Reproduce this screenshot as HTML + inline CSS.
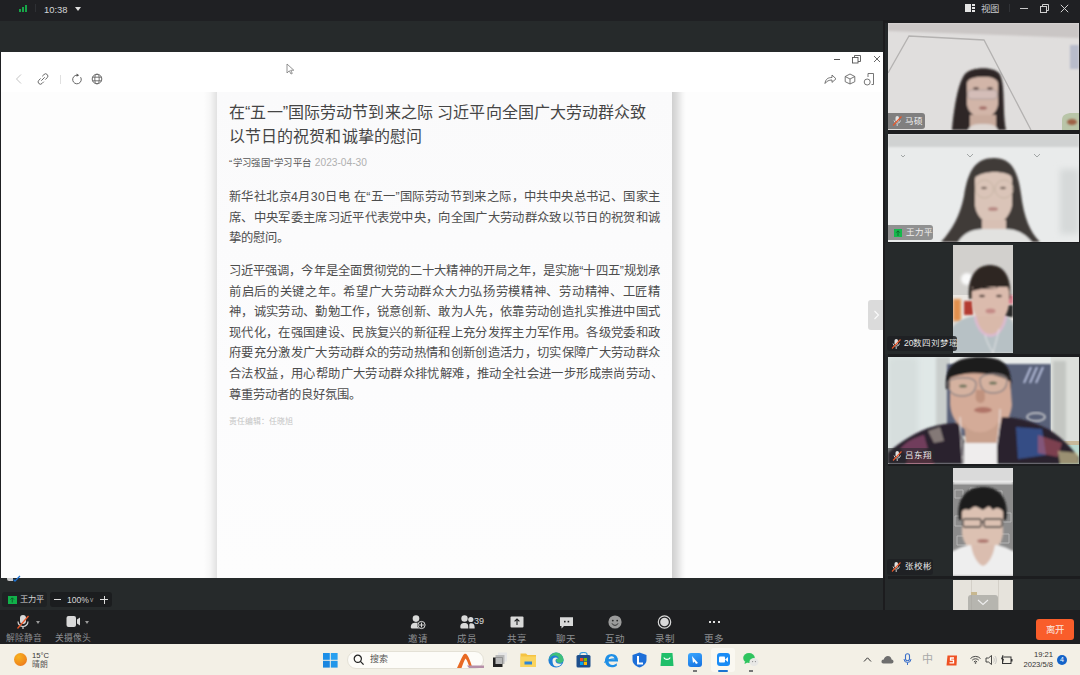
<!DOCTYPE html>
<html lang="zh-CN"><head><meta charset="utf-8">
<style>
*{margin:0;padding:0;box-sizing:border-box}
html,body{width:1080px;height:675px;overflow:hidden;background:#1f2023;font-family:"Liberation Sans",sans-serif;position:relative}
.a{position:absolute}
#topbar{left:0;top:0;width:1080px;height:20px;background:#1f2023}
#band{left:0;top:21px;width:885px;height:31px;background:#262a2b}
#panel{left:1px;top:52px;width:882px;height:526px;background:#ffffff;overflow:hidden}
#namearea{left:0;top:578px;width:885px;height:32px;background:#262a2b}
#toolbar{left:0;top:610px;width:1080px;height:34px;background:#1e1f21}
#taskbar{left:0;top:644px;width:1080px;height:31px;background:#f3f0e6}
#col{left:885px;top:20px;width:195px;height:590px;background:#1c1d1f}
.tile{background:#262a2b}
.vid{overflow:hidden}
.t{white-space:nowrap;line-height:1}
.title{font-size:16px;color:#454545;left:229px;letter-spacing:0.08px}
.body{font-size:12.3px;color:#4d4d4d;left:229px}
.lbl{font-size:9.5px;color:#8c8e91;width:40px;text-align:center}
</style></head><body>
<div id="topbar" class="a"></div>
<!-- signal -->
<div class="a" style="left:19px;top:9px;width:2px;height:3px;background:#17a548"></div>
<div class="a" style="left:22px;top:7px;width:2px;height:5px;background:#17a548"></div>
<div class="a" style="left:25px;top:5px;width:2px;height:7px;background:#17a548"></div>
<div class="a" style="left:35px;top:4px;width:1px;height:8px;background:#2e3034"></div>
<div class="a t" style="left:44px;top:4.5px;font-size:9.4px;color:#d4d6d8">10:38</div>
<div class="a" style="left:75px;top:6.5px;width:0;height:0;border-left:3px solid transparent;border-right:3px solid transparent;border-top:4px solid #e0e0e0"></div>
<!-- top right -->
<div class="a" style="left:965px;top:4px;width:6px;height:8px;background:#e4e4e4"></div>
<div class="a" style="left:972px;top:4px;width:3px;height:2px;background:#e4e4e4"></div>
<div class="a" style="left:972px;top:7px;width:3px;height:2px;background:#e4e4e4"></div>
<div class="a" style="left:972px;top:10px;width:3px;height:2px;background:#e4e4e4"></div>
<div class="a t" style="left:981px;top:4px;font-size:9.4px;color:#c8cacc">视图</div>
<div class="a" style="left:1009px;top:4px;width:1px;height:8px;background:#303236"></div>
<div class="a" style="left:1020px;top:8px;width:8px;height:1px;background:#c8c8c8"></div>
<svg class="a" style="left:1040px;top:4px" width="9" height="9"><rect x="0.5" y="2.5" width="6" height="6" fill="none" stroke="#cfcfcf" stroke-width="1"/><path d="M2.5 2.5V0.5H8.5V6.5H6.5" fill="none" stroke="#cfcfcf" stroke-width="1"/></svg>
<svg class="a" style="left:1060px;top:4px" width="9" height="9"><path d="M0.8 0.8L8.2 8.2M8.2 0.8L0.8 8.2" stroke="#d0d0d0" stroke-width="1"/></svg>

<div id="band" class="a"></div>
<div id="panel" class="a"></div>
<!-- panel toolbar -->
<svg class="a" style="left:13px;top:73px" width="12" height="12"><path d="M8 1.5L3.5 6L8 10.5" fill="none" stroke="#c4c4c4" stroke-width="1"/></svg>
<svg class="a" style="left:36px;top:72px" width="14" height="14"><path d="M6.2 4.3L8 2.5a2.2 2.2 0 0 1 3.2 3.2L9.3 7.6M7.8 9.7L6 11.5a2.2 2.2 0 0 1-3.2-3.2L4.7 6.4M5.3 8.7L8.7 5.3" fill="none" stroke="#6a6a6a" stroke-width="1"/></svg>
<div class="a" style="left:60px;top:75px;width:1px;height:9px;background:#e0e0e0"></div>
<svg class="a" style="left:71px;top:73px" width="12" height="12"><path d="M6 2.2A4.3 4.3 0 1 0 9.6 4.2" fill="none" stroke="#666" stroke-width="1"/><path d="M5.6 0.6L8.2 2.2L5.6 3.8Z" fill="#555"/></svg>
<svg class="a" style="left:91px;top:73px" width="12" height="12"><circle cx="6" cy="6" r="4.8" fill="none" stroke="#666" stroke-width="1"/><ellipse cx="6" cy="6" rx="2.2" ry="4.8" fill="none" stroke="#666" stroke-width="0.9"/><path d="M1.5 4.2H10.5M1.5 7.8H10.5" stroke="#666" stroke-width="0.9"/></svg>
<svg class="a" style="left:286px;top:63px" width="9" height="12"><path d="M1 1L1 10L3.3 7.8L5 11L6.3 10.4L4.7 7.3L7.8 7.2Z" fill="#fff" stroke="#777" stroke-width="0.8"/></svg>
<div class="a" style="left:834px;top:59px;width:6px;height:1px;background:#555"></div>
<svg class="a" style="left:852px;top:55px" width="9" height="9"><rect x="0.5" y="2.5" width="5.5" height="5.5" fill="none" stroke="#555" stroke-width="0.9"/><path d="M2.5 2.5V0.5H8.5V6.5H6" fill="none" stroke="#555" stroke-width="0.9"/></svg>
<svg class="a" style="left:873px;top:55px" width="8" height="8"><path d="M1 1L7 7M7 1L1 7" stroke="#555" stroke-width="0.9"/></svg>
<svg class="a" style="left:824px;top:73px" width="13" height="12"><path d="M1 10.5C1.5 6 4 4.5 8 4.5V2L12 5.8L8 9.4V7C5 7 2.8 8 1 10.5Z" fill="none" stroke="#666" stroke-width="0.9"/></svg>
<svg class="a" style="left:844px;top:73px" width="12" height="12"><path d="M6 1L10.8 3.5V8.7L6 11L1.2 8.7V3.5Z M1.2 3.5L6 6L10.8 3.5M6 6V11" fill="none" stroke="#666" stroke-width="0.9"/></svg>
<svg class="a" style="left:863px;top:72px" width="12" height="14"><path d="M5 1.5H10.5V12.5H8.5" fill="none" stroke="#666" stroke-width="0.9"/><path d="M5 1.5V5" stroke="#666" stroke-width="0.9"/><circle cx="4.2" cy="10" r="3" fill="none" stroke="#666" stroke-width="0.9"/></svg>

<!-- content area -->
<div class="a" style="left:1px;top:92px;width:882px;height:486px;background:#fdfdfd"></div>
<div class="a" style="left:204px;top:92px;width:13px;height:486px;background:linear-gradient(90deg,rgba(0,0,0,0),rgba(0,0,0,0.03) 50%,rgba(0,0,0,0.11))"></div>
<div class="a" style="left:217px;top:92px;width:455px;height:486px;background:linear-gradient(180deg,#fafafb,#fcfcfd 60%,#fdfdfd)"></div>
<div class="a" style="left:672px;top:92px;width:14px;height:486px;background:linear-gradient(90deg,rgba(0,0,0,0.18),rgba(0,0,0,0.12) 35%,rgba(0,0,0,0.03) 75%,rgba(0,0,0,0))"></div>

<div class="a" style="left:868px;top:300px;width:15px;height:30px;border-radius:3px 0 0 3px;background:#dbdbdb"></div>
<svg class="a" style="left:873px;top:310px" width="7" height="10"><path d="M1.5 1L5.5 5L1.5 9" fill="none" stroke="#fafafa" stroke-width="1.1"/></svg>
<div class="a t title" style="top:104.8px">在“五一”国际劳动节到来之际 习近平向全国广大劳动群众致</div>
<div class="a t title" style="top:129.2px">以节日的祝贺和诚挚的慰问</div>
<div class="a t" style="left:229px;top:158px;font-size:9.4px;letter-spacing:0.45px;color:#555">“学习强国”学习平台 <span style="color:#b0b0b0;font-size:10.2px;letter-spacing:0">2023-04-30</span></div>

<div class="a t body" style="top:191.2px;letter-spacing:0.4px">新华社北京4月30日电 在“五一”国际劳动节到来之际，中共中央总书记、国家主</div>
<div class="a t body" style="top:211.6px;letter-spacing:0.32px">席、中央军委主席习近平代表党中央，向全国广大劳动群众致以节日的祝贺和诚</div>
<div class="a t body" style="top:231.6px;letter-spacing:0px">挚的慰问。</div>

<div class="a t body" style="top:265.2px;letter-spacing:0.08px">习近平强调，今年是全面贯彻党的二十大精神的开局之年，是实施“十四五”规划承</div>
<div class="a t body" style="top:285.8px;letter-spacing:0.7px">前启后的关键之年。希望广大劳动群众大力弘扬劳模精神、劳动精神、工匠精</div>
<div class="a t body" style="top:306.3px;letter-spacing:0.32px">神，诚实劳动、勤勉工作，锐意创新、敢为人先，依靠劳动创造扎实推进中国式</div>
<div class="a t body" style="top:326.9px;letter-spacing:0.32px">现代化，在强国建设、民族复兴的新征程上充分发挥主力军作用。各级党委和政</div>
<div class="a t body" style="top:347.4px;letter-spacing:0.32px">府要充分激发广大劳动群众的劳动热情和创新创造活力，切实保障广大劳动群众</div>
<div class="a t body" style="top:368px;letter-spacing:0.4px">合法权益，用心帮助广大劳动群众排忧解难，推动全社会进一步形成崇尚劳动、</div>
<div class="a t body" style="top:388.6px;letter-spacing:0px">尊重劳动者的良好氛围。</div>
<div class="a t" style="left:229px;top:418px;font-size:7.9px;color:#c4c4c4">责任编辑：任晓旭</div>

<div id="namearea" class="a"></div>
<div class="a" style="left:6.5px;top:578px;width:6px;height:2.5px;border-radius:0 0 0 2px;background:#c8c8c8"></div>
<svg class="a" style="left:12px;top:575px" width="9" height="7"><path d="M1.5 4.5L3 6L8 1" fill="none" stroke="#1a6fd0" stroke-width="1.3"/></svg>
<!-- name tag + zoom -->
<div class="a" style="left:2px;top:592px;width:45px;height:15px;border-radius:3px;background:#1f2224"></div>
<div class="a" style="left:8px;top:596px;width:8.5px;height:7.5px;background:#11b14a"></div><svg class="a" style="left:8px;top:596px" width="9" height="8"><path d="M4.25 6.5V2M2.5 3.6L4.25 1.8L6 3.6" fill="none" stroke="#0a5a24" stroke-width="0.9"/></svg>
<div class="a t" style="left:19.5px;top:595.5px;font-size:8.2px;color:#d6d6d6">王力平</div>
<div class="a" style="left:50px;top:592px;width:62px;height:15px;border-radius:3px;background:#1b1d1f"></div>
<div class="a" style="left:54px;top:599px;width:7px;height:1px;background:#ddd"></div>
<div class="a t" style="left:67px;top:595.5px;font-size:8.6px;color:#d6d6d6">100%</div>
<div class="a t" style="left:90px;top:597px;font-size:6.5px;color:#aaa">v</div>
<div class="a" style="left:100px;top:599px;width:8px;height:1px;background:#ddd"></div>
<div class="a" style="left:103.5px;top:595.5px;width:1px;height:8px;background:#ddd"></div>

<div id="col" class="a"></div>

<!-- right column -->
<div class="a" style="left:883px;top:20px;width:2px;height:590px;background:#1c1c1e"></div>
<div class="a" style="left:885px;top:23px;width:3px;height:587px;background:#24282a"></div>
<svg width="0" height="0" style="position:absolute"><defs>
<filter id="b1" x="-20%" y="-20%" width="140%" height="140%"><feGaussianBlur stdDeviation="1"/></filter>
<filter id="b2" x="-20%" y="-20%" width="140%" height="140%"><feGaussianBlur stdDeviation="1.5"/></filter>
<filter id="b3" x="-50%" y="-50%" width="200%" height="200%"><feGaussianBlur stdDeviation="3"/></filter>
</defs></svg>
<!-- video 1 -->
<svg class="a" style="left:888px;top:23px" width="191" height="107">
<rect width="191" height="107" fill="#e0dedd"/>
<path d="M0 0H191V15L0 8Z" fill="#cac6c5" filter="url(#b1)"/>
<path d="M0 50L21 13L96 17L143 107" fill="none" stroke="#b4b2b1" stroke-width="1.3"/>
<rect x="182" y="22" width="9" height="24" fill="#b8bccb" filter="url(#b1)"/>
<path d="M174 107V97C174 92 178 90 184 90H191V107Z" fill="#b9c5a8"/>
<ellipse cx="184" cy="99" rx="5" ry="3" fill="#9c6045" filter="url(#b1)"/>
<g filter="url(#b1)">
<path d="M64 107C66 84 70 60 77 51C83 44 104 43 111 50C118 60 114 86 118 107Z" fill="#2e2725"/>
<path d="M79 60C80 52 108 51 110 60L110 82C108 92 100 95 95 95C90 95 81 92 79 82Z" fill="#d2b5a8"/>
<path d="M78 56C82 49 106 48 111 56C104 53 86 53 78 56Z" fill="#2e2725"/>
<rect x="80" y="67" width="29" height="9" rx="3" fill="rgba(215,200,205,.45)" stroke="#a49896" stroke-width="0.8"/>
<ellipse cx="88" cy="65.5" rx="3" ry="1.4" fill="#6a5550"/>
<ellipse cx="102" cy="65.5" rx="3" ry="1.4" fill="#6a5550"/>
<ellipse cx="95" cy="85" rx="4" ry="1.7" fill="#a36c66"/>
<rect x="82" y="92" width="26" height="15" fill="#c9ab9d"/>
<path d="M80 107C82 102 86 101 95 101C104 101 108 102 110 107Z" fill="#ded7d3"/>
</g>
</svg>
<div class="a" style="left:888px;top:113px;width:37px;height:16px;border-radius:0 3px 3px 0;background:rgba(90,90,90,.72)"></div>
<svg class="a" style="left:891px;top:115px" width="12" height="12"><rect x="4.5" y="1" width="3.5" height="6" rx="1.75" fill="#e0e0e0"/><path d="M3 5.5a3.3 3.3 0 0 0 6.5 0M6.2 9V11" fill="none" stroke="#e0e0e0" stroke-width="0.9"/><path d="M2 10.5L10.5 1.5" stroke="#e8572a" stroke-width="1.1"/></svg>
<div class="a t" style="left:905px;top:117px;font-size:8.5px;color:#f0f0f0">马硕</div>

<!-- video 2 -->
<svg class="a" style="left:888px;top:134px" width="191" height="108">
<rect width="191" height="108" fill="#e9ebeb"/>
<rect width="191" height="13" fill="#d0d2d2" filter="url(#b1)"/>
<path d="M13 21L15 23L17 21M79 20L82 23L85 20M146 20L149 23L152 20" fill="none" stroke="#9a9e9e" stroke-width="0.9"/>
<rect x="172" y="35" width="19" height="65" fill="#d6d9d9" filter="url(#b3)"/>
<g filter="url(#b1)">
<path d="M53 108C64 96 72 82 76 62C80 36 88 24 106 24C124 24 130 38 133 60C136 84 142 98 152 108Z" fill="#3f3a38"/>
<path d="M87 45C88 33 123 32 124 45L124 72C121 85 112 90 106 90C99 90 89 85 87 72Z" fill="#dac4b8"/>
<path d="M86 44C90 28 120 28 126 44C118 36 96 36 86 44Z" fill="#3f3a38"/>
<circle cx="96.5" cy="55" r="9" fill="none" stroke="#c6b5a5" stroke-width="1"/>
<circle cx="116" cy="55" r="9" fill="none" stroke="#c6b5a5" stroke-width="1"/>
<ellipse cx="96" cy="54" rx="3" ry="1.3" fill="#76625a"/>
<ellipse cx="115" cy="54" rx="3" ry="1.3" fill="#76625a"/>
<ellipse cx="105" cy="75" rx="5" ry="2" fill="#b88a84"/>
<rect x="94" y="86" width="24" height="14" fill="#d8c0b4"/>
<path d="M70 108C76 98 86 95 94 95L118 95C126 95 136 98 144 108Z" fill="#e2e2e0"/>
</g>
</svg>
<div class="a" style="left:888px;top:225px;width:45px;height:15px;border-radius:0 3px 3px 0;background:rgba(110,110,110,.72)"></div>
<div class="a" style="left:894px;top:229px;width:8px;height:8px;background:#14b84c"></div><svg class="a" style="left:894px;top:229px" width="8" height="8"><path d="M4 7V2M2.3 3.6L4 1.8L5.7 3.6" fill="none" stroke="#0a5a24" stroke-width="0.8"/></svg>
<div class="a t" style="left:906px;top:228px;font-size:8.5px;color:#f0f0f0">王力平</div>

<!-- tile 3 -->
<div class="a tile" style="left:885px;top:243px;width:195px;height:111px"></div>
<svg class="a" style="left:953px;top:245px" width="60" height="108">
<rect width="60" height="108" fill="#dcdad6"/>
<rect width="60" height="50" fill="#d2d0cd"/>
<circle cx="14" cy="34" r="6" fill="#fafafa" filter="url(#b2)"/>
<rect x="0" y="50" width="60" height="25" fill="#ebe7e3"/>
<rect x="0" y="54" width="8" height="22" fill="#e2904e" filter="url(#b2)"/>
<rect x="11" y="56" width="9" height="14" fill="#b33a30" filter="url(#b1)"/>
<rect x="50" y="60" width="10" height="12" fill="#2a2a2a" filter="url(#b1)"/>
<rect x="52" y="50" width="8" height="9" fill="#d77a8a" filter="url(#b1)"/>
<g filter="url(#b1)">
<path d="M16 54C14 34 22 20 37 20C52 20 59 34 57 54Z" fill="#2d2724"/>
<path d="M19 42L56 42L56 60C54 74 45 79 37.5 79C30 79 21 74 19 60Z" fill="#dbbbad"/>
<path d="M19 46C20 38 24 34 28 34L28 44ZM28 44C30 32 40 30 44 44ZM44 44C46 34 54 36 56 46L56 40L19 40Z" fill="#2d2724"/>
<ellipse cx="29" cy="51" rx="3" ry="1.2" fill="#4a3a35"/>
<ellipse cx="46" cy="51" rx="3" ry="1.2" fill="#4a3a35"/>
<ellipse cx="37.5" cy="66" rx="5" ry="2.5" fill="#c48a86"/>
<path d="M-2 108V84C4 76 12 72 22 71L53 71C58 73 60 76 62 84V108Z" fill="#b7c1c5"/>
<path d="M22 71C26 96 48 98 53 71Z" fill="#d9b9aa"/>
<path d="M22 71C26 96 48 98 53 71" fill="none" stroke="#dcbad0" stroke-width="2.5"/>
<path d="M32 90C34 98 38 104 40 108M46 84C44 94 42 100 40 108" fill="none" stroke="#eee" stroke-width="0.8"/>
</g>
</svg>
<div class="a" style="left:887px;top:336px;width:70px;height:15px;border-radius:3px;background:rgba(30,32,35,.85)"></div>
<svg class="a" style="left:890px;top:338px" width="12" height="12"><rect x="4.5" y="1" width="3.5" height="6" rx="1.75" fill="#e0e0e0"/><path d="M3 5.5a3.3 3.3 0 0 0 6.5 0M6.2 9V11" fill="none" stroke="#e0e0e0" stroke-width="0.9"/><path d="M2 10.5L10.5 1.5" stroke="#e8572a" stroke-width="1.1"/></svg>
<div class="a t" style="left:904px;top:339px;font-size:8.5px;color:#e8e8e8">20数四刘梦瑶</div>

<!-- video 4 -->
<svg class="a" style="left:888px;top:357px" width="191" height="107">
<rect width="191" height="107" fill="#e0e8e7"/>
<rect x="0" y="0" width="30" height="107" fill="#d6dedd" filter="url(#b3)"/>
<rect x="48" y="0" width="14" height="100" fill="#c9cecc" filter="url(#b2)"/>
<rect x="62" y="0" width="100" height="8" fill="#e9ecea"/>
<rect x="59" y="7" width="104" height="72" fill="#596078" filter="url(#b1)"/>
<path d="M143 10L136 26M149 10L142 26M155 10L148 26" stroke="#c8d0ee" stroke-width="1.8" filter="url(#b1)"/>
<ellipse cx="148" cy="60" rx="9" ry="4" fill="none" stroke="#d8d8d8" stroke-width="1.5" filter="url(#b1)"/>
<rect x="163" y="0" width="28" height="107" fill="#dcdfdb"/>
<rect x="165" y="4" width="13" height="80" fill="#c3c6c2" filter="url(#b2)"/>
<rect x="163" y="84" width="28" height="4" fill="#c6b89a"/>
<rect x="170" y="88" width="21" height="19" fill="#b7d8cf"/>
<g filter="url(#b1)">
<path d="M58 32C56 8 68 0 92 0C116 0 124 8 123 32Z" fill="#1e1b1d"/>
<path d="M62 22C64 10 120 10 122 22L124 48C122 68 108 76 93 76C78 76 64 68 62 48Z" fill="#d4ab98"/>
<path d="M60 22C62 4 120 4 124 26C114 16 78 12 60 22Z" fill="#1e1b1d"/>
<path d="M60 26C60 20 86 18 88 26C88 35 83 39 74 39C66 39 60 35 60 26ZM92 23C92 15 118 15 119 23C119 32 114 36 105 36C96 36 92 32 92 23Z" fill="rgba(220,220,210,.15)" stroke="#8f8585" stroke-width="1.4"/>
<ellipse cx="75" cy="29" rx="4" ry="1.6" fill="#6a7258"/>
<ellipse cx="105" cy="26" rx="4" ry="1.6" fill="#6a7258"/>
<path d="M88 33C88 40 86 44 92 46C97 46 98 42 96 33Z" fill="#c0927e"/>
<ellipse cx="95" cy="53" rx="9" ry="3" fill="#b07468"/>
<path d="M76 66C80 78 104 80 112 62L110 90L78 90Z" fill="#c8a08c"/>
<path d="M0 107V96C8 88 22 78 40 71C52 67 62 66 70 66L78 90L108 90L114 60C128 60 144 64 160 72C174 80 184 92 191 100V107Z" fill="#29232f"/>
<path d="M12 92C18 84 28 80 36 78L40 92L22 100Z" fill="#a2507a" opacity=".6"/>
<path d="M40 74L52 70L56 84L46 86Z" fill="#e0d0c0" opacity=".5"/>
<path d="M128 70L154 72L158 98L130 102Z" fill="#3e6ac0" opacity=".6"/>
<path d="M150 78L174 86L170 100L150 96Z" fill="#d06070" opacity=".5"/>
<path d="M170 94L190 96L191 107H172Z" fill="#e6d8a0" opacity=".6"/>
<path d="M20 100L40 96L46 107H18Z" fill="#c84a6a" opacity=".6"/>
<rect x="76" y="86" width="33" height="22" fill="#efeded"/>
<path d="M72 60C73 80 74 95 75 107M112 52C112 75 108 90 106 107" fill="none" stroke="#ece8e8" stroke-width="1"/>
</g>
</svg>
<div class="a" style="left:888px;top:448px;width:47px;height:15px;border-radius:0 3px 3px 0;background:rgba(40,40,45,.6)"></div>
<svg class="a" style="left:891px;top:450px" width="12" height="12"><rect x="4.5" y="1" width="3.5" height="6" rx="1.75" fill="#e0e0e0"/><path d="M3 5.5a3.3 3.3 0 0 0 6.5 0M6.2 9V11" fill="none" stroke="#e0e0e0" stroke-width="0.9"/><path d="M2 10.5L10.5 1.5" stroke="#e8572a" stroke-width="1.1"/></svg>
<div class="a t" style="left:905px;top:451px;font-size:8.5px;color:#e8e8e8">吕东翔</div>

<!-- tile 5 -->
<div class="a tile" style="left:885px;top:466px;width:195px;height:110px"></div>
<svg class="a" style="left:953px;top:468px" width="60" height="108">
<rect width="60" height="108" fill="#8c8c8c"/>
<rect width="60" height="14" fill="#dadada"/>
<rect y="13" width="60" height="3" fill="#f0f0f0" filter="url(#b1)"/>
<path d="M2 22h8v8h-8zM17 20h10v9h-10zM40 23h9v8h-9zM2 48h9v10h-9zM50 45h8v9h-8zM4 68h10v9h-10zM47 66h9v9h-9z" fill="none" stroke="#b4b4b4" stroke-width="1"/>
<g filter="url(#b1)">
<path d="M6 52C3 32 12 19 30 19C48 19 56 32 53 52Z" fill="#1c1b1c"/>
<path d="M9 44C9 36 50 36 50 44L50 66C48 80 38 85 30 85C22 85 11 80 9 66Z" fill="#dcc1b2"/>
<path d="M7 46C7 26 53 24 53 46C48 40 44 38 40 42L36 38L30 42L22 38L16 42C12 40 9 42 7 46Z" fill="#1c1b1c"/>
<rect x="10" y="51" width="18" height="8" rx="1.5" fill="none" stroke="#2e2e2e" stroke-width="1.3"/>
<rect x="31" y="51" width="18" height="8" rx="1.5" fill="none" stroke="#2e2e2e" stroke-width="1.3"/>
<path d="M28 54H31" stroke="#2e2e2e" stroke-width="1"/>
<ellipse cx="30" cy="73" rx="6" ry="2" fill="#b07a72"/>
<path d="M-2 108V84C6 80 12 77 18 77L42 77C48 77 54 80 62 84V108Z" fill="#eeeeee"/>
<path d="M18 77C20 90 26 97 30 98C34 97 40 90 42 77Z" fill="#dabdaf"/>
</g>
</svg>
<div class="a" style="left:887px;top:559px;width:46px;height:16px;border-radius:3px;background:rgba(30,32,35,.85)"></div>
<svg class="a" style="left:890px;top:561px" width="12" height="12"><rect x="4.5" y="1" width="3.5" height="6" rx="1.75" fill="#e0e0e0"/><path d="M3 5.5a3.3 3.3 0 0 0 6.5 0M6.2 9V11" fill="none" stroke="#e0e0e0" stroke-width="0.9"/><path d="M2 10.5L10.5 1.5" stroke="#e8572a" stroke-width="1.1"/></svg>
<div class="a t" style="left:905px;top:562px;font-size:8.5px;color:#e8e8e8">张校彬</div>

<!-- tile 6 -->
<div class="a tile" style="left:885px;top:579px;width:195px;height:31px"></div>
<div class="a vid" style="left:953px;top:580px;width:60px;height:30px;background:#e6e3dc">
  <div class="a" style="left:18px;top:0;width:1px;height:30px;background:#d4d0c8"></div>
  <div class="a" style="left:45px;top:0;width:1px;height:30px;background:#d4d0c8"></div>
  <div class="a" style="left:18px;top:12px;width:6px;height:3px;background:#c8b890"></div>
</div>
<div class="a" style="left:968px;top:595px;width:30px;height:15px;border-radius:3px 3px 0 0;background:rgba(150,150,145,.6)"></div>
<svg class="a" style="left:977px;top:599px" width="12" height="7"><path d="M1 1L6 5.5L11 1" fill="none" stroke="#eee" stroke-width="1.1"/></svg>

<div id="toolbar" class="a"></div>
<div id="taskbar" class="a"></div>

<!-- taskbar -->
<div class="a" style="left:13.5px;top:653px;width:13px;height:13px;border-radius:50%;background:radial-gradient(circle at 35% 30%,#f7b21f,#f08a1c 60%,#e5621b)"></div>
<div class="a t" style="left:32px;top:651.5px;font-size:7.6px;color:#333">15°C</div>
<div class="a t" style="left:32px;top:661px;font-size:7.8px;color:#555">晴朗</div>
<svg class="a" style="left:323px;top:653px" width="15" height="15"><rect x="0" y="0" width="6.8" height="6.8" fill="#1c8fe8"/><rect x="7.8" y="0" width="6.8" height="6.8" fill="#28a0f0"/><rect x="0" y="7.8" width="6.8" height="6.8" fill="#1a86e0"/><rect x="7.8" y="7.8" width="6.8" height="6.8" fill="#2196ea"/></svg>
<div class="a" style="left:347px;top:651px;width:137px;height:18px;border-radius:9px;background:#fdfcf8;border:1px solid #e4e1d6"></div>
<svg class="a" style="left:353px;top:654px" width="12" height="12"><circle cx="4.8" cy="4.8" r="3.6" fill="none" stroke="#222" stroke-width="1.2"/><path d="M7.4 7.4L10.6 10.6" stroke="#222" stroke-width="1.3"/></svg>
<div class="a t" style="left:370px;top:655px;font-size:9px;color:#555">搜索</div>
<svg class="a" style="left:455px;top:652px" width="30" height="17"><path d="M2 16C4 12 6 7 8 3.5C9 1.8 10.5 1.2 11.8 2.4C14 5 16 11 17.5 16H14.5C13.5 12 12 8 10.5 6.5C9.5 8 8 12 6.5 16Z" fill="#e86a24"/><path d="M12 13.5H29V16H14Z" fill="#b68fa8"/></svg>
<svg class="a" style="left:492px;top:652px" width="16" height="16"><rect x="6" y="0.5" width="9" height="9" fill="#e6e6e6"/><rect x="3.5" y="3" width="9" height="9" fill="#b9b9b9"/><rect x="1" y="5.5" width="9.5" height="9.5" fill="#222"/><rect x="3.5" y="5.5" width="7" height="6.5" fill="#b9b9b9"/></svg>
<svg class="a" style="left:520px;top:652px" width="17" height="16"><path d="M0.5 1.5H6L7.5 3H16V15H0.5Z" fill="#f5c342"/><path d="M0.5 4.5H16V15H0.5Z" fill="#fad45e"/><rect x="4.5" y="9.5" width="7.5" height="3" fill="#2f86d6"/></svg>
<svg class="a" style="left:548px;top:652px" width="16" height="16"><circle cx="8" cy="8" r="7.6" fill="#1f7fd8"/><path d="M8 0.4A7.6 7.6 0 0 1 15.6 8C15.6 10 13.5 11.2 11 10.8C9 10.5 8.2 9.3 8.2 8.2C8.2 6.8 9.8 6.2 11 6.6C10 4 7.5 3 5 3.8C2.6 4.6 1 7 1.2 9A7.6 7.6 0 0 1 8 0.4Z" fill="#3fc07a"/><path d="M4.5 8.5C4.5 5.8 7.5 4.8 10.2 6.2C8.5 6.2 7.5 7.2 7.5 8.5C7.5 11.2 10.5 12.5 13.8 11.5C12.2 14.2 9 15 6.5 14C5 13 4.5 10.5 4.5 8.5Z" fill="#f4f1e8"/></svg>
<svg class="a" style="left:576px;top:652px" width="15" height="16"><path d="M4 3V2C4 1 5 0.5 7.5 0.5C10 0.5 11 1 11 2V3" fill="none" stroke="#3aa0e0" stroke-width="1.2"/><rect x="0.5" y="3" width="14" height="12.5" rx="1.5" fill="#1d4f8c"/><rect x="4" y="6" width="3.2" height="3.2" fill="#f25022"/><rect x="7.8" y="6" width="3.2" height="3.2" fill="#7fba00"/><rect x="4" y="9.8" width="3.2" height="3.2" fill="#00a4ef"/><rect x="7.8" y="9.8" width="3.2" height="3.2" fill="#ffb900"/></svg>
<svg class="a" style="left:604px;top:653px" width="15" height="15"><path d="M7.5 1C11.5 1 14 3.8 14 7.5V8.5H4.5C4.8 10.8 6.2 12 8.3 12C10 12 11.5 11.2 12.8 10.2V12.8C11.3 13.8 9.6 14.3 7.8 14.3C3.8 14.3 1 11.6 1 7.6C1 3.8 3.8 1 7.5 1ZM4.6 6.2H10.6C10.4 4.4 9.2 3.3 7.6 3.3C6 3.3 4.9 4.4 4.6 6.2Z" fill="#1e8fe6"/><path d="M0 9C3 6 9 4.5 15 5.5C10 5.5 4 7 0.5 10Z" fill="#1e8fe6"/></svg>
<svg class="a" style="left:632px;top:652px" width="15" height="16"><path d="M7.5 0.5L14.5 3V8C14.5 11.5 11.5 14 7.5 15.5C3.5 14 0.5 11.5 0.5 8V3Z" fill="#1d6fd8"/><path d="M6 4V11.5H11" fill="none" stroke="#fff" stroke-width="2"/></svg>
<svg class="a" style="left:660px;top:652px" width="14" height="15"><path d="M1.5 1H12.5L13.5 14H0.5Z" fill="#1fbf6a"/><path d="M4 5.5C4.5 8 9.5 8 10 5.5" fill="none" stroke="#fff" stroke-width="1.2"/></svg>
<div class="a" style="left:688px;top:653px;width:14px;height:14px;border-radius:3px;background:linear-gradient(160deg,#3aa7ff,#1470e0)"></div>
<svg class="a" style="left:690px;top:655px" width="10" height="10"><path d="M2 1L8 8L6 9L4.5 6.5L3 8Z" fill="#fff"/></svg>
<div class="a" style="left:693px;top:670px;width:4px;height:1.5px;background:#777"></div>
<div class="a" style="left:711px;top:648px;width:23.5px;height:24px;border-radius:3px;background:#faf8f1"></div>
<div class="a" style="left:716.5px;top:652.5px;width:13.5px;height:13.5px;border-radius:3px;background:#1a8cf5"></div>
<svg class="a" style="left:718px;top:655px" width="11" height="9"><rect x="1" y="1.5" width="6" height="6" rx="1" fill="#fff"/><path d="M7 4.5L10 2V7L7 4.5Z" fill="#fff"/></svg>
<div class="a" style="left:718px;top:670px;width:10px;height:2px;border-radius:1px;background:#1a74d0"></div>
<svg class="a" style="left:743px;top:652px" width="16" height="15"><ellipse cx="6" cy="6" rx="5.8" ry="5" fill="#2ec45e"/><path d="M2 9.5L1.5 12L4.5 10.5Z" fill="#2ec45e"/><ellipse cx="11" cy="10" rx="4.6" ry="4" fill="#e8e8e6"/><circle cx="9.6" cy="9.6" r="0.6" fill="#888"/><circle cx="12.4" cy="9.6" r="0.6" fill="#888"/></svg>
<div class="a" style="left:749px;top:670px;width:4px;height:1.5px;background:#777"></div>

<svg class="a" style="left:863px;top:656px" width="9" height="7"><path d="M1 5.5L4.5 1.8L8 5.5" fill="none" stroke="#333" stroke-width="1"/></svg>
<svg class="a" style="left:881px;top:655px" width="13" height="9"><path d="M2.5 8.5C1 8.5 0.5 7.5 0.5 6.5C0.5 5.3 1.5 4.5 2.8 4.6C3.2 2.3 5 1 6.8 1C9 1 10.4 2.6 10.6 4.5C11.8 4.6 12.5 5.5 12.5 6.6C12.5 7.8 11.7 8.5 10.5 8.5Z" fill="#6e6e6e"/></svg>
<svg class="a" style="left:903px;top:653px" width="9" height="13"><rect x="2.5" y="0.8" width="4" height="7" rx="2" fill="none" stroke="#3b6fc9" stroke-width="1.1"/><path d="M1 6A3.5 3.5 0 0 0 8 6M4.5 9.5V12" fill="none" stroke="#3b6fc9" stroke-width="1"/></svg>
<div class="a t" style="left:922px;top:654px;font-size:11px;color:#a8a8a8">中</div>
<svg class="a" style="left:946px;top:655px" width="12" height="11"><path d="M1.5 0.5H11L10.5 10.5H0.5Z" fill="#ef5123"/><path d="M8 3H4.5V5.2H7.5V7.8H3.5" fill="none" stroke="#fff" stroke-width="1.3"/></svg>
<svg class="a" style="left:970px;top:655px" width="11" height="9"><path d="M0.5 3.5A7 7 0 0 1 10.5 3.5M2.2 5.2A4.6 4.6 0 0 1 8.8 5.2M3.9 6.9A2.2 2.2 0 0 1 7.1 6.9" fill="none" stroke="#333" stroke-width="0.9"/><circle cx="5.5" cy="8" r="0.8" fill="#333"/></svg>
<svg class="a" style="left:985px;top:654px" width="12" height="12"><path d="M1 4H3.5L6.5 1.5V10.5L3.5 8H1Z" fill="none" stroke="#333" stroke-width="0.9"/><path d="M8.5 3.5C9.5 4.5 9.5 7.5 8.5 8.5M10 2C11.8 4 11.8 8 10 10" fill="none" stroke="#bbb" stroke-width="0.8"/></svg>
<svg class="a" style="left:1000px;top:654px" width="13" height="11"><rect x="2.5" y="3" width="8.5" height="6.5" fill="none" stroke="#333" stroke-width="1"/><rect x="11" y="5" width="1.5" height="2.5" fill="#333"/><path d="M3 1L1.5 5H3.5L2.5 9" fill="none" stroke="#333" stroke-width="0.9"/></svg>
<div class="a t" style="left:1022px;top:651px;width:31px;text-align:right;font-size:7.6px;color:#333">19:21</div>
<div class="a t" style="left:1020px;top:661px;width:33px;text-align:right;font-size:7.6px;color:#333">2023/5/8</div>
<div class="a" style="left:1057px;top:654.5px;width:10px;height:10px;border-radius:50%;background:#1363c9"></div>
<div class="a t" style="left:1057px;top:656px;width:10px;text-align:center;font-size:7px;color:#fff">4</div>

<!-- toolbar icons -->
<svg class="a" style="left:14px;top:614px" width="18" height="17"><rect x="6" y="1" width="6" height="9" rx="3" fill="#d9d9d9"/><path d="M4 7.5a5 5 0 0 0 10 0M9 12.5V15" fill="none" stroke="#d9d9d9" stroke-width="1.2"/><path d="M3.5 14.5L14.5 2" stroke="#e8572a" stroke-width="1.3"/></svg>
<div class="a" style="left:36px;top:621px;width:0;height:0;border-left:2.5px solid transparent;border-right:2.5px solid transparent;border-top:3px solid #9a9a9a"></div>
<div class="a t lbl" style="left:3.6px;top:634px;font-size:8.8px">解除静音</div>
<svg class="a" style="left:66px;top:615px" width="15" height="13"><rect x="0.5" y="1" width="9.5" height="11" rx="2" fill="#d9d9d9"/><path d="M11 4.5L14 2.5V10.5L11 8.5Z" fill="#d9d9d9"/></svg>
<div class="a" style="left:85px;top:621px;width:0;height:0;border-left:2.5px solid transparent;border-right:2.5px solid transparent;border-top:3px solid #9a9a9a"></div>
<div class="a t lbl" style="left:53.4px;top:634px;font-size:8.8px">关摄像头</div>

<svg class="a" style="left:410px;top:615px" width="17" height="15"><circle cx="6" cy="3.6" r="3.3" fill="#d9d9d9"/><path d="M0.8 12.5C0.8 9 2.5 7.8 6 7.8C8 7.8 9 8.3 9.6 9V13.5H2A1.2 1.2 0 0 1 0.8 12.5Z" fill="#d9d9d9"/><circle cx="11.5" cy="10" r="4.3" fill="#1e1f21"/><circle cx="11.5" cy="10" r="3.6" fill="none" stroke="#d9d9d9" stroke-width="1"/><path d="M11.5 7.6V12.4M9.1 10H13.9" stroke="#d9d9d9" stroke-width="1"/></svg>
<div class="a t lbl" style="left:398px;top:634px">邀请</div>
<svg class="a" style="left:460px;top:615px" width="15" height="14"><circle cx="4.5" cy="3.5" r="3.2" fill="#d9d9d9"/><circle cx="10.8" cy="4.5" r="2.6" fill="#d9d9d9"/><path d="M0.3 12.3C0.3 9 1.6 8 4.5 8C7.4 8 8.3 9 8.3 12.3V13.5H1.5A1.2 1.2 0 0 1 0.3 12.3Z" fill="#d9d9d9"/><path d="M9.3 13.5V9.8C9.3 8.8 10 8.3 11 8.3C13.6 8.3 14.6 9.5 14.6 12.3V13.5Z" fill="#d9d9d9"/></svg>
<div class="a t" style="left:474px;top:617px;font-size:9px;color:#dcdcdc">39</div>
<div class="a t lbl" style="left:447px;top:634px">成员</div>
<svg class="a" style="left:510px;top:616px" width="14" height="12"><rect x="0.5" y="0.5" width="13" height="11" rx="1" fill="#d9d9d9"/><path d="M7 9V3.2M4.6 5.4L7 3L9.4 5.4" fill="none" stroke="#1e1f21" stroke-width="1.1"/></svg>
<div class="a t lbl" style="left:497px;top:634px">共享</div>
<svg class="a" style="left:559px;top:616px" width="15" height="13"><path d="M1 1.2H14V10H5L2.5 12.5V10H1Z" fill="#d9d9d9"/><rect x="5" y="4.8" width="1.6" height="1.6" fill="#1e1f21"/><rect x="8.6" y="4.8" width="1.6" height="1.6" fill="#1e1f21"/></svg>
<div class="a t lbl" style="left:546px;top:634px">聊天</div>
<svg class="a" style="left:608px;top:615px" width="14" height="14"><circle cx="7" cy="7" r="6.6" fill="#9b9b9b"/><circle cx="4.8" cy="5.6" r="0.9" fill="#2a2a2a"/><circle cx="9.2" cy="5.6" r="0.9" fill="#2a2a2a"/><path d="M4 8.3a3.2 3.2 0 0 0 6 0" fill="none" stroke="#2a2a2a" stroke-width="0.9"/></svg>
<div class="a t lbl" style="left:595px;top:634px">互动</div>
<svg class="a" style="left:657px;top:615px" width="15" height="14"><circle cx="7.5" cy="7" r="6.2" fill="none" stroke="#dcdcdc" stroke-width="1.2"/><circle cx="7.5" cy="7" r="4.3" fill="#d9d9d9"/></svg>
<div class="a t lbl" style="left:645px;top:634px">录制</div>
<div class="a" style="left:708.5px;top:621px;width:2px;height:2px;background:#e0e0e0"></div>
<div class="a" style="left:713px;top:621px;width:2px;height:2px;background:#e0e0e0"></div>
<div class="a" style="left:717.5px;top:621px;width:2px;height:2px;background:#e0e0e0"></div>
<div class="a t lbl" style="left:694px;top:634px">更多</div>
<div class="a" style="left:1036px;top:619px;width:38px;height:20.5px;border-radius:3px;background:#f95d2a"></div>
<div class="a t" style="left:1036px;top:625px;width:38px;text-align:center;font-size:9.4px;color:#fbe8e0">离开</div>

</body></html>
